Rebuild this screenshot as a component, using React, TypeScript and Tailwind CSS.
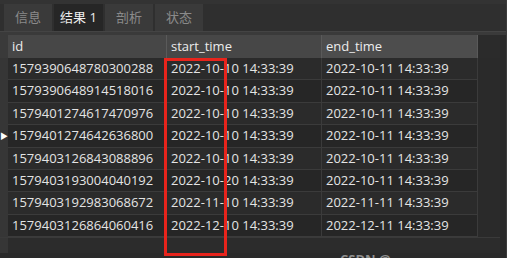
import React from 'react';

const rows = [
  ['1579390648780300288', '2022-10-10 14:33:39', '2022-10-11 14:33:39'],
  ['1579390648914518016', '2022-10-10 14:33:39', '2022-10-11 14:33:39'],
  ['1579401274617470976', '2022-10-10 14:33:39', '2022-10-11 14:33:39'],
  ['1579401274642636800', '2022-10-10 14:33:39', '2022-10-11 14:33:39'],
  ['1579403126843088896', '2022-10-10 14:33:39', '2022-10-11 14:33:39'],
  ['1579403193004040192', '2022-10-20 14:33:39', '2022-10-11 14:33:39'],
  ['1579403192983068672', '2022-11-10 14:33:39', '2022-11-11 14:33:39'],
  ['1579403126864060416', '2022-12-10 14:33:39', '2022-12-11 14:33:39'],
];

const tabs = ['信息', '结果 1', '剖析', '状态'];

export default function App() {
  return (
    <div className="w-[514px] h-[258px] bg-white overflow-hidden" style={{ fontFamily: '"Open Sans", "Noto Sans CJK SC", sans-serif' }}>
      <div className="relative w-[507px] h-[258px] bg-[#2a2a2a] border-r border-[#3c3c3c] flex flex-col">
        <div className="h-[4px] bg-[#333333]" />
        {/* tab bar */}
        <div className="h-[27px] flex items-stretch bg-[#2f2f2f] pl-[4px] gap-[2px]">
          {tabs.map((t, i) => (
            <div
              key={t}
              className={
                i === 1
                  ? 'w-[49px] flex items-center justify-center text-[13px] text-[#ededed] bg-[#262626]'
                  : 'w-[48px] flex items-center justify-center text-[13px] text-[#8a8a8a] bg-[#3a3a3a]'
              }
            >
              {t}
            </div>
          ))}
        </div>
        <div className="h-[4px] bg-[#3a3a3a] border-t border-[#444]" />
        {/* table */}
        <div className="flex flex-col pr-[6px]">
          <div className="h-[23px] flex text-[13px] text-[#ececec]">
            <div className="w-[8px] bg-[#3a3a3a]" />
            <div className="w-[159px] bg-[#474747] border-r border-[#5a5a5a] pl-[4px] flex items-center">id</div>
            <div className="w-[155px] bg-[#474747] border-r border-[#5a5a5a] pl-[4px] flex items-center">start_time</div>
            <div className="w-[156px] bg-[#4d4d4d] border-r border-[#5a5a5a] pl-[4px] flex items-center">end_time</div>
            <div className="flex-1 bg-[#2b2b2b]" />
          </div>
          {rows.map((r, i) => (
            <div key={r[0]} className={`h-[22.4px] flex text-[13px] text-[#e4e4e4] ${i % 2 === 0 ? 'bg-[#2b2b2b]' : 'bg-[#262626]'}`}>
              <div className="w-[8px] bg-[#363636] flex items-center justify-center text-[8px] text-white">{i === 3 ? '▶' : ''}</div>
              <div className="w-[159px] border-r border-b border-[#3b3b3b] pl-[4px] flex items-center">{r[0]}</div>
              <div className="w-[155px] border-r border-b border-[#3b3b3b] pl-[4px] flex items-center">{r[1]}</div>
              <div className="w-[156px] border-r border-b border-[#3b3b3b] pl-[4px] flex items-center">{r[2]}</div>
              <div className="flex-1 bg-[#2a2a2a]" />
            </div>
          ))}
          <div className="h-[16px] bg-[#2c2c2c] border-t border-[#3a3a3a] flex">
            <div className="w-[8px] bg-[#363636]" />
          </div>
        </div>
        <div className="absolute left-[340px] top-[251px] text-[13px] leading-[16px] text-[#8f8f8f] font-bold">CSDN @...</div>
        {/* highlight box */}
        <div className="absolute left-[164px] top-[58px] w-[63px] h-[198px] border-[3px] border-[#e8241c]" />
      </div>
    </div>
  );
}
